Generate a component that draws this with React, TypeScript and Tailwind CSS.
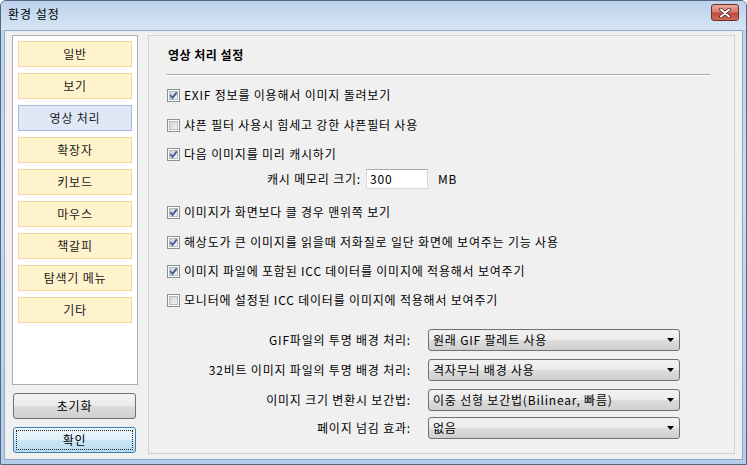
import React from "react";

function Check({ checked }: { checked: boolean }) {
  return (
    <svg width="13" height="13" viewBox="0 0 13 13" className="shrink-0">
      <defs>
        <linearGradient id="cbg" x1="0" y1="0" x2="1" y2="1">
          <stop offset="0" stopColor="#cbd0d6" />
          <stop offset="1" stopColor="#f7f7f7" />
        </linearGradient>
      </defs>
      <rect x="0.5" y="0.5" width="12" height="12" fill="#fdfdfd" stroke="#8e8f8f" />
      <rect x="2.5" y="2.5" width="8" height="8" fill="url(#cbg)" stroke="#b7bcc2" />
      {checked && (
        <path d="M3.3 6.2 L5.5 8.9 L9.8 3.3" fill="none" stroke="#4a5e95" strokeWidth="1.9" />
      )}
    </svg>
  );
}

function Row({ checked, label, mt }: { checked: boolean; label: string; mt: string }) {
  return (
    <div className={`flex h-[20px] items-center ${mt}`}>
      <div className="ml-[1px]">
        <Check checked={checked} />
      </div>
      <span className="ml-[4px] whitespace-nowrap">{label}</span>
    </div>
  );
}

function Arrow() {
  return (
    <svg width="7" height="4" viewBox="0 0 7 4">
      <path d="M0 0 H7 L3.5 4 Z" fill="#000" />
    </svg>
  );
}

function Combo({ label, value, mt }: { label: string; value: string; mt: string }) {
  return (
    <div className={`flex h-[22px] items-center ${mt}`}>
      <div className="w-[245px] text-right whitespace-nowrap">{label}</div>
      <div className="ml-[17px] flex h-[22px] w-[252px] items-center justify-between rounded-[3px] border border-[#707070] bg-[linear-gradient(#f2f2f2,#ebebeb_50%,#dddddd_50%,#cfcfcf)] pl-[4px] pr-[5px]">
        <span className="whitespace-nowrap">{value}</span>
        <Arrow />
      </div>
    </div>
  );
}

const navItems = ["일반", "보기", "영상 처리", "확장자", "키보드", "마우스", "책갈피", "탐색기 메뉴", "기타"];

export default function App() {
  return (
    <div className="flex h-[465px] w-[747px] flex-col overflow-hidden rounded-t-[6px] border border-[#55667c] bg-[linear-gradient(#bcd2ec,#c9dbf1_40%,#b3cdeb)] font-['Noto_Sans_CJK_KR','Noto_Sans',sans-serif] text-[12px] leading-[16px] tracking-[0.8px] text-black">
      {/* Title bar */}
      <div className="flex h-[29px] shrink-0 items-start justify-between bg-[linear-gradient(#bcd2ec,#d6e5f5)]">
        <div className="ml-[7px] mt-[5px] text-[12px] leading-[16px] tracking-[1px] text-black">환경 설정</div>
        <div className="mr-[7px] mt-[3px] flex h-[17px] w-[28px] items-center justify-center rounded-[3px] border border-[#6b2f28] bg-[linear-gradient(#e9aa9c,#d77b6d_45%,#c24a3c_55%,#cf6a55)]">
          <svg width="12" height="10" viewBox="0 0 12 10">
            <path d="M2 1.5 L10 8.5 M10 1.5 L2 8.5" stroke="#4a1f1a" strokeWidth="3.6" strokeLinecap="round" />
            <path d="M2 1.5 L10 8.5 M10 1.5 L2 8.5" stroke="#ffffff" strokeWidth="2" strokeLinecap="round" />
          </svg>
        </div>
      </div>
      {/* Body */}
      <div className="mx-[3px] mb-[4px] flex flex-1 border border-[#8ea9cc] bg-[#f0f0f0] pb-[5px] pl-[7px] pr-[7px] pt-[4px]">
        {/* Left column */}
        <div className="flex w-[126px] shrink-0 flex-col">
          <div className="flex h-[350px] flex-col gap-[6px] border border-[#adadad] bg-white px-[5px] pt-[5px]">
            {navItems.map((n) => (
              <div
                key={n}
                className={
                  n === "영상 처리"
                    ? "flex h-[26px] items-center justify-center border border-[#a7badb] bg-[#dfe8f7] text-[#1a1a1a]"
                    : "flex h-[26px] items-center justify-center border border-[#f1d99b] bg-[#fff3cd] text-[#1a1a1a]"
                }
              >
                {n}
              </div>
            ))}
          </div>
          <div className="ml-[1px] mt-[8px] flex h-[26px] w-[123px] items-center justify-center rounded-[3px] border border-[#707070] bg-[linear-gradient(#f2f2f2,#ebebeb_50%,#dddddd_50%,#cfcfcf)]">
            초기화
          </div>
          <div className="relative ml-[1px] mt-[8px] flex h-[26px] w-[123px] items-center justify-center rounded-[3px] border border-[#3c7fb1] bg-[linear-gradient(#eef7fc,#e0f0fa_50%,#cbe7f7_50%,#b9dcf1)]">
            <span className="pointer-events-none absolute inset-[2px] border border-dotted border-[#222]" />
            확인
          </div>
        </div>
        {/* Right panel */}
        <div className="ml-[10px] flex w-[587px] flex-col border border-[#d0d0d0] pl-[17px] pt-[11px]">
          <div className="ml-[2px] h-[16px] font-bold tracking-[0.5px]">영상 처리 설정</div>
          <div className="mt-[11px] h-px w-[544px] bg-[#a9a9a9]" />
          <div className="h-px w-[544px] bg-white" />
          <Row checked mt="mt-[9px]" label="EXIF 정보를 이용해서 이미지 돌려보기" />
          <Row checked={false} mt="mt-[10px]" label="샤픈 필터 사용시 힘세고 강한 샤픈필터 사용" />
          <Row checked mt="mt-[9px]" label="다음 이미지를 미리 캐시하기" />
          <div className="mt-[5px] flex h-[20px] items-center">
            <div className="w-[195px] text-right whitespace-nowrap">캐시 메모리 크기:</div>
            <div className="ml-[5px] flex h-[20px] w-[62px] items-center border border-[#d5d9e0] border-t-[#abadb3] bg-white pl-[3px]">
              300
            </div>
            <div className="ml-[10px]">MB</div>
          </div>
          <Row checked mt="mt-[13px]" label="이미지가 화면보다 클 경우 맨위쪽 보기" />
          <Row checked mt="mt-[10px]" label="해상도가 큰 이미지를 읽을때 저화질로 일단 화면에 보여주는 기능 사용" />
          <Row checked mt="mt-[9px]" label="이미지 파일에 포함된 ICC 데이터를 이미지에 적용해서 보여주기" />
          <Row checked={false} mt="mt-[9px]" label="모니터에 설정된 ICC 데이터를 이미지에 적용해서 보여주기" />
          <Combo mt="mt-[19px]" label="GIF파일의 투명 배경 처리:" value="원래 GIF 팔레트 사용" />
          <Combo mt="mt-[8px]" label="32비트 이미지 파일의 투명 배경 처리:" value="격자무늬 배경 사용" />
          <Combo mt="mt-[8px]" label="이미지 크기 변환시 보간법:" value="이중 선형 보간법(Bilinear, 빠름)" />
          <Combo mt="mt-[6px]" label="페이지 넘김 효과:" value="없음" />
        </div>
      </div>
    </div>
  );
}
